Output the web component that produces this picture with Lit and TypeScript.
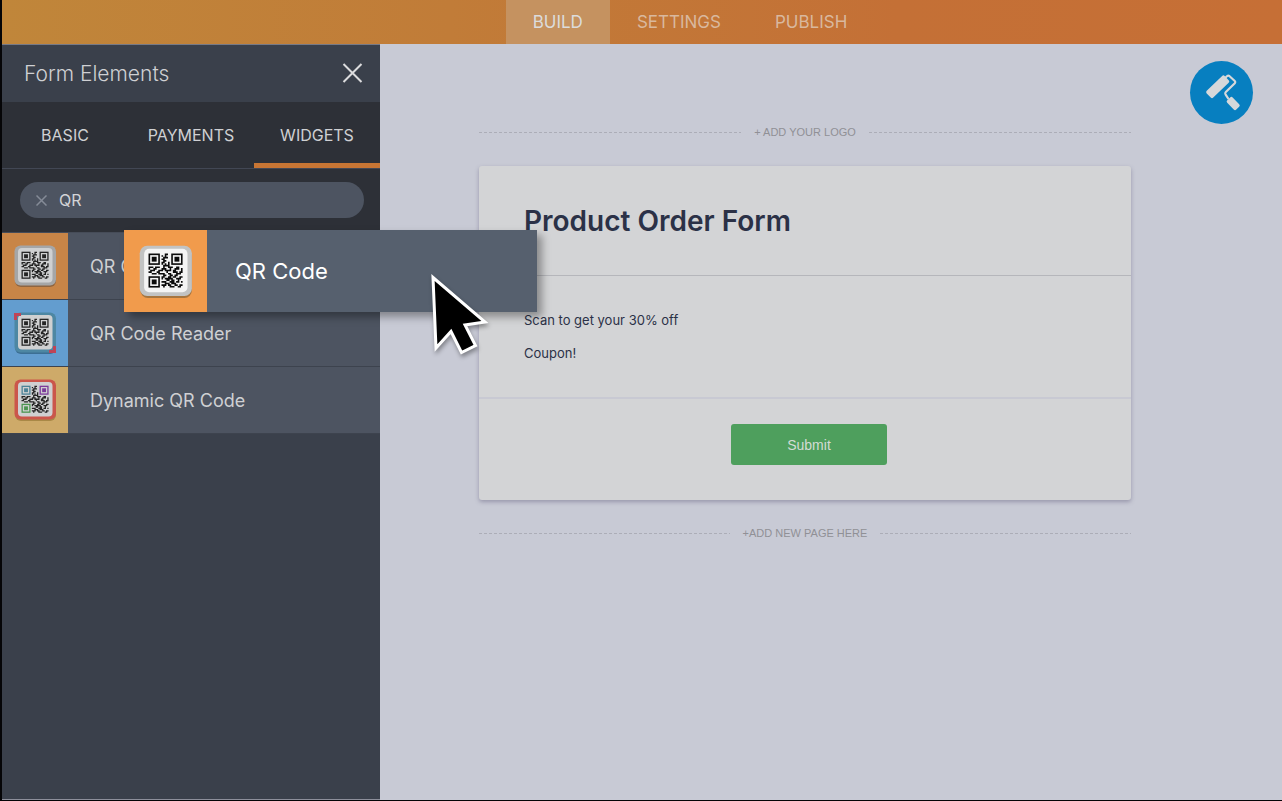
import { LitElement, html, svg, css, nothing } from "lit";
import { customElement, property, state } from "lit/decorators.js";
import { classMap } from "lit/directives/class-map.js";

type IconKind = "code" | "reader" | "dynamic";

const MATRIX = [
  "000000000011000000000",
  "000000001010000000000",
  "000000000111000000000",
  "000000001100000000000",
  "000000000110000000000",
  "000000001100100000000",
  "000000001010100000000",
  "000000000111100000000",
  "111011100100111001100",
  "100110001110010011101",
  "011100111011110110001",
  "110001100001000111011",
  "001110111100110001110",
  "000000000110011011000",
  "000000001100110110011",
  "000000001011111001110",
  "000000000001101100100",
  "000000001110011101101",
  "000000000011101110000",
  "000000001110110011011",
  "000000000100011100110",
];

const MODULES = MATRIX.map((row, y) =>
  [...row].map((cell, x) => (cell === "1" ? `M${x} ${y}h1v1h-1z` : "")).join("")
).join("");

const finder = (x: number, y: number, color: string) => svg`
  <g fill="none" stroke=${color}>
    <rect x=${x + 0.5} y=${y + 0.5} width="6" height="6" />
    <rect x=${x + 2} y=${y + 2} width="3" height="3" fill=${color} stroke="none" />
  </g>`;

@customElement("qr-icon")
export class QrIcon extends LitElement {
  @property() kind: IconKind = "code";
  @property({ type: Boolean }) bright = false;

  static styles = css`
    :host { display: block; aspect-ratio: 1; }
    svg { display: block; width: 100%; height: 100%; }
  `;

  render() {
    const dark = this.bright ? "#0b0b0b" : "#242424";
    const face = this.bright ? "#f4f4f4" : "#cfd0d1";
    const frame = { code: this.bright ? "#c2c3c3" : "#a5a6a7", reader: "#4d87a3", dynamic: "#cb564b" }[this.kind];
    const shade = { code: this.bright ? "#a6753f" : "#8f6540", reader: "#3c6f94", dynamic: "#a98846" }[this.kind];
    const eyes = this.kind === "dynamic" ? ["#4b8297", "#7b3a99", "#4b9450"] : [dark, dark, dark];
    return html`
      <svg viewBox="0 0 66 66" aria-hidden="true">
        <rect x="13" y="15" width="41" height="39" rx="6" fill=${shade} />
        <rect x="12.5" y="12.5" width="41.500" height="40" rx="6" fill=${frame} />
        <rect x="16" y="15" width="34.500" height="34.5" rx="4" fill=${face} />
        ${this.kind === "reader"
          ? svg`<path d="M12 20V13h7v3h-4v4zM54 46v7h-7v-3h4v-4z" fill="#bf4457" />`
          : nothing}
        <g transform="translate(19.5 18.7) scale(1.29)">
          <path d=${MODULES} fill=${dark} />
          ${finder(0, 0, eyes[0])} ${finder(14, 0, eyes[1])} ${finder(0, 14, eyes[2])}
        </g>
      </svg>
    `;
  }
}

@customElement("app-root")
export class AppRoot extends LitElement {
  @state() private tab = "WIDGETS";
  @state() private query = "QR";

  private widgets: { label: string; kind: IconKind }[] = [
    { label: "QR Code", kind: "code" },
    { label: "QR Code Reader", kind: "reader" },
    { label: "Dynamic QR Code", kind: "dynamic" },
  ];

  static styles = css`
    :host {
      display: flex;
      flex-direction: column;
      position: relative;
      box-sizing: border-box;
      min-height: 100vh;
      border-left: 2px solid #050507;
      border-bottom: 1px solid #050507;
      background: #c8cad5;
      font-family: Inter, "Liberation Sans", sans-serif;
      color: #2b3147;
    }
    * { box-sizing: border-box; }
    button { border: 0; padding: 0; background: none; font: inherit; color: inherit; cursor: pointer; }
    .top {
      display: flex;
      justify-content: center;
      height: 44px;
      padding-left: 96px;
      background: linear-gradient(90deg, #c0863a, #c17c38 35%, #c47036 70%, #c66f36);
    }
    .top a {
      display: flex;
      align-items: center;
      padding: 0 27px;
      font-size: 17px;
      color: #d9b89e;
      text-decoration: none;
    }
    .top a.current { background: #c59260; color: #dcdcdc; }
    .body { flex: 1; display: flex; }
    .panel {
      width: 378px;
      flex: none;
      background: #3a404b;
      border-top: 1px solid #777a86;
      border-bottom: 1px solid #8d8f9b;
      color: #cfd0d3;
    }
    .panel-head {
      display: flex;
      align-items: center;
      justify-content: space-between;
      height: 57px;
      padding: 0 17px 0 22px;
    }
    .panel-head h2 { margin: 0; font-size: 21px; font-weight: 300; }
    .close svg { display: block; width: 21px; height: 21px; }
    .tabs {
      display: grid;
      grid-template-columns: repeat(3, 1fr);
      height: 67px;
      background: #2d3037;
      border-bottom: 1px solid #424754;
    }
    .tabs button { font-size: 16px; border-bottom: 5px solid transparent; padding-top: 5px; }
    .tabs .current { border-bottom-color: #c77534; }
    .search { padding: 13px 16px 14px 18px; background: #2d3037; }
    .field {
      display: flex;
      align-items: center;
      gap: 12px;
      height: 36px;
      padding: 0 16px;
      border-radius: 18px;
      background: #4d5461;
    }
    .field svg { display: block; width: 11px; height: 11px; }
    .field input {
      flex: 1;
      min-width: 0;
      border: 0;
      padding: 0;
      outline: 0;
      background: none;
      font: inherit;
      font-size: 16px;
      color: #d3d4d7;
    }
    .list { list-style: none; margin: 0; padding: 1px 0 0; background: #464c58; }
    .item {
      display: flex;
      align-items: center;
      gap: 22px;
      width: 100%;
      height: 67px;
      background: #4d5461;
      border-bottom: 1px solid #3d434e;
      font-size: 18px;
      text-align: left;
    }
    .item qr-icon { width: 66px; }
    .code { background: #c88547; }
    .reader { background: #639dcf; }
    .dynamic { background: #ceaa69; }
    .canvas { position: relative; flex: 1; min-width: 0; padding: 80px 151px 40px 99px; }
    .rule {
      display: flex;
      align-items: center;
      gap: 13px;
      width: 100%;
      height: 16px;
      font: 11px "Liberation Sans", sans-serif;
      color: #909096;
    }
    .rule::before, .rule::after {
      content: "";
      flex: 1;
      height: 1px;
      background: repeating-linear-gradient(90deg, #acadb7 0 3px, transparent 3px 5px);
    }
    .form {
      margin: 26px 0 25px;
      border-radius: 3px;
      background: #d3d4d6;
      box-shadow: 0 2px 4px rgba(80, 75, 110, 0.4);
    }
    .form h1 {
      margin: 0;
      padding: 38px 45px 37px;
      border-bottom: 1px solid #b5b6bb;
      font-size: 28px;
      line-height: 34px;
      font-weight: 600;
    }
    .copy { padding: 28px 45px 27px; border-bottom: 2px solid #c8c9d3; font-size: 13px; line-height: 33px; }
    .copy p { margin: 0; }
    .actions { display: flex; justify-content: center; padding: 25px 0 35px 8px; }
    .submit {
      width: 156px;
      height: 41px;
      border-radius: 3px;
      background: #4e9f5d;
      font: 14px "Liberation Sans", sans-serif;
      color: #d3dcd5;
    }
    .paint {
      position: absolute;
      top: 17px;
      right: 29px;
      width: 63px;
      height: 63px;
      border-radius: 50%;
      background: #077fc0;
    }
    .paint svg { display: block; width: 63px; height: 63px; }
    .ghost {
      position: absolute;
      left: 122px;
      top: 230px;
      display: flex;
      align-items: center;
      gap: 28px;
      width: 413px;
      height: 82px;
      background: #56606e;
      box-shadow: 5px 5px 8px rgba(0, 0, 0, 0.35);
      font-size: 22px;
      color: #fff;
    }
    .thumb { width: 83px; height: 82px; background: #f19b4c; }
    .cursor {
      position: absolute;
      left: 418px;
      top: 264px;
      width: 80px;
      height: 100px;
      filter: drop-shadow(1px 3px 2px rgba(0, 0, 0, 0.35));
      pointer-events: none;
    }
  `;

  render() {
    return html`
      <nav class="top" aria-label="Form builder">
        <a class="current" href="#build">BUILD</a>
        <a href="#settings">SETTINGS</a>
        <a href="#publish">PUBLISH</a>
      </nav>
      <div class="body">
        <aside class="panel">
          <header class="panel-head">
            <h2>Form Elements</h2>
            <button class="close" aria-label="Close">
              <svg viewBox="0 0 21 21" stroke="#dcdcde" stroke-width="2"><path d="M1.5 1l18 18M19.5 1l-18 18" /></svg>
            </button>
          </header>
          <div class="tabs" role="tablist">
            ${["BASIC", "PAYMENTS", "WIDGETS"].map(
              (name) => html`<button
                role="tab"
                aria-selected=${this.tab === name}
                class=${classMap({ current: this.tab === name })}
                @click=${() => (this.tab = name)}
              >${name}</button>`
            )}
          </div>
          <div class="search">
            <div class="field">
              <button aria-label="Clear search" @click=${() => (this.query = "")}>
                <svg viewBox="0 0 11 11" stroke="#858b97" stroke-width="1.5"><path d="M.5.5l10 10M10.5.5l-10 10" /></svg>
              </button>
              <input
                type="text"
                aria-label="Search widgets"
                .value=${this.query}
                @input=${(e: InputEvent) => (this.query = (e.target as HTMLInputElement).value)}
              />
            </div>
          </div>
          <ul class="list">
            ${this.widgets.map(
              (w) => html`<li>
                <button class="item"><qr-icon class=${w.kind} .kind=${w.kind}></qr-icon>${w.label}</button>
              </li>`
            )}
          </ul>
        </aside>
        <main class="canvas">
          <button class="rule">+ ADD YOUR LOGO</button>
          <section class="form">
            <h1>Product Order Form</h1>
            <div class="copy">
              <p>Scan to get your 30% off</p>
              <p>Coupon!</p>
            </div>
            <div class="actions"><button class="submit">Submit</button></div>
          </section>
          <button class="rule">+ADD NEW PAGE HERE</button>
          <button class="paint" aria-label="Form designer">
            <svg viewBox="0 0 63 63">
              <g fill="#d6d8da">
                <rect x="-12.5" y="-4.700" width="25" height="9.400" rx="1.800" transform="translate(27.700 25.800) rotate(-44)" />
                <rect x="-6.500" y="-3.800" width="13" height="7.600" rx="1.800" transform="translate(43.200 42.500) rotate(46)" />
              </g>
              <path d="M35 17l2.300-2q1-.7 2 0l5.500 5q1 1 0 2.200l-9 8.800q-1 1-.3 2.300l3 4.700" fill="none" stroke="#d6d8da" stroke-width="2.200" stroke-linejoin="round" />
            </svg>
          </button>
        </main>
      </div>
      <div class="ghost">
        <div class="thumb"><qr-icon kind="code" bright></qr-icon></div>
        QR Code
      </div>
      <svg class="cursor" viewBox="0 0 80 100" aria-hidden="true">
        <path
          d="M13 13.500L65 58l-20 3L55.500 81.500 41.500 88.500 31 67.500 16 84z"
          fill="#000" stroke="#fff" stroke-width="3" stroke-linejoin="miter"
        />
      </svg>
    `;
  }
}
